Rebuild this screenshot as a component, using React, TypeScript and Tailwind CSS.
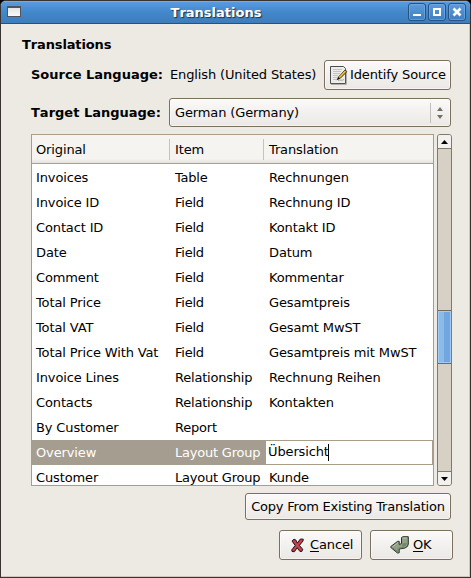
import type { ReactNode } from "react";

const rows: [string, string, string][] = [
  ["Invoices", "Table", "Rechnungen"],
  ["Invoice ID", "Field", "Rechnung ID"],
  ["Contact ID", "Field", "Kontakt ID"],
  ["Date", "Field", "Datum"],
  ["Comment", "Field", "Kommentar"],
  ["Total Price", "Field", "Gesamtpreis"],
  ["Total VAT", "Field", "Gesamt MwST"],
  ["Total Price With Vat", "Field", "Gesamtpreis mit MwST"],
  ["Invoice Lines", "Relationship", "Rechnung Reihen"],
  ["Contacts", "Relationship", "Kontakten"],
  ["By Customer", "Report", ""],
  ["Overview", "Layout Group", "Übersicht"],
  ["Customer", "Layout Group", "Kunde"],
];

const face =
  "rounded-[3px] border border-[#7b705f] bg-linear-to-b from-[#fbfaf9] via-[#f3f1ef] to-[#ebe8e4] shadow-[inset_0_0_0_1px_rgba(255,255,255,0.5)]";

function Button({ className, children }: { className: string; children: ReactNode }) {
  return <button className={`flex shrink-0 items-center ${face} ${className}`}>{children}</button>;
}

function TitleButton({ children }: { children: ReactNode }) {
  return (
    <button className="h-[18px] w-[18px] rounded-[3px] border border-[#28517f] bg-linear-to-b from-[#5c9bdc] to-[#3e7fc0] shadow-[inset_0_0_0_1px_rgba(125,178,232,0.55)]">
      <svg className="block" width="16" height="16" viewBox="0 0 16 16" fill="none" stroke="#fff" strokeWidth="2">
        {children}
      </svg>
    </button>
  );
}

function EditIcon() {
  return (
    <svg width="19" height="20" viewBox="0 0 19 20" className="shrink-0">
      <path d="M1.5 1.5H14.5L16.5 3.5V18.5H1.5z" fill="#ececea" stroke="#4c4d4b" />
      <path d="M2 19.3H17.3V5" fill="none" stroke="#8a8a86" strokeWidth=".8" />
      <path d="M4 4.5H13M4 6.5H12M4 8.5H11M4 10.5H9M4 12.5H8M4 14.5H8" stroke="#c3c4c1" />
      <path d="M9 15.5C11 14.5 13 16 15 14.5" stroke="#a5a6a2" fill="none" />
      <path d="M9.3 12.2L16 5.1L17.7 6.8L10.9 13.7Z" fill="#e5ae2d" stroke="#352b16" strokeWidth=".9" />
      <path d="M10.5 12L16.3 6" stroke="#f7d04b" strokeWidth=".8" />
      <path d="M7.7 15.2L9 12L11 13.8Z" fill="#111" />
    </svg>
  );
}

function CancelIcon() {
  return (
    <svg width="13" height="15" viewBox="0 0 13 15" className="shrink-0">
      <path
        d="M1 3L3 1.2L5 2.2L6.3 5.1L9.4 1L12.3 1.2L12 3L8.4 7.4L11.7 11.3L11 13.3L9 13.5L6.1 9.8L3.5 13.7L1 13.5L.8 11.8L4.2 7.5Z"
        fill="#b83d49"
        stroke="#251516"
        strokeLinejoin="round"
      />
      <path d="M3 2.8L9.8 12M10.6 2.3L2.5 12" stroke="#c9505a" strokeWidth=".8" />
    </svg>
  );
}

function OkIcon() {
  return (
    <svg width="20" height="18" viewBox="0 0 20 18" className="shrink-0">
      <path
        d="M11.5 1.5L13 .7H18.3V8L17.5 10.4L15 12L9.2 13V16.8L7.5 17L.8 11.5V10.5L7.7 5.3H9.2V8.4L11.5 7.6Z"
        fill="#91a185"
        stroke="#27332a"
        strokeLinejoin="round"
      />
      <path d="M12.5 2H17" fill="none" stroke="#b9c5ad" />
      <path d="M12.3 7.5L17.5 7L15.5 10L12.3 11Z" fill="#74856e" />
      <path d="M8 6.8L2.3 11" fill="none" stroke="#b3c0a7" />
      <path d="M2.5 11.7L8 15.7V12.3L14.5 11.2" fill="none" stroke="#74856e" />
    </svg>
  );
}

export default function App() {
  return (
    <div className="h-[578px] w-[471px] overflow-hidden bg-black font-['DejaVu_Sans',sans-serif] text-[13px] leading-[16px] tracking-[-0.13px] text-black">
      <div className="flex h-full flex-col overflow-hidden rounded-t-[6px] border border-[#38332f] bg-[#edeae3] shadow-[inset_-1px_-1px_0_#d1c6bb]">
        <header className="flex h-[23px] shrink-0 items-center border-b border-[#28517f] bg-linear-to-b from-[#5b9ce0] via-[#4288cb] to-[#3e7dba] pr-[4px] pl-[6px] shadow-[inset_0_1px_0_#75ace5]">
          <span className="mb-[1px] h-[11px] w-[14px] border border-t-2 border-[#4d5660] bg-linear-to-b from-[#e4e4e4] to-[#fafafa]" />
          <h1 className="flex-1 pt-[2px] pl-[3px] text-center font-bold tracking-normal text-white [font-kerning:none] [text-shadow:1px_1px_1px_#17334f]">Translations</h1>
          <div className="flex gap-[2px]">
            <TitleButton><path d="M4 11H12" /></TitleButton>
            <TitleButton><path d="M5 5H11V11H5Z" /></TitleButton>
            <TitleButton><path d="M4.5 4.5L11.5 11.5M11.5 4.5L4.5 11.5" strokeWidth="2.6" /></TitleButton>
          </div>
        </header>

        <main className="flex flex-1 flex-col pr-[19px] pl-[30px]">
          <h2 className="-ml-[9px] mt-[13px] font-bold tracking-[-0.13px] [font-kerning:none]">Translations</h2>
          <div className="mt-[7px] flex h-[30px] items-center">
            <span className="w-[139px] shrink-0 font-bold tracking-normal whitespace-nowrap">Source Language:</span>
            <span className="flex-1 whitespace-nowrap">English (United States)</span>
            <Button className="h-[30px] w-[127px] gap-[2px] pl-[4px] whitespace-nowrap">
              <EditIcon />
              Identify Source
            </Button>
          </div>
          <div className="mt-[8px] flex h-[29px] items-center">
            <span className="w-[138px] shrink-0 font-bold tracking-normal whitespace-nowrap [font-kerning:none]">Target Language:</span>
            <div className={`flex h-[29px] flex-1 items-center pl-[5px] ${face}`}>
              <span className="flex-1">German (Germany)</span>
              <span className="h-[20px] w-px bg-[#c3beb7]" />
              <svg width="19" height="14" viewBox="0 0 19 14" fill="#776e62">
                <path d="M6 5L9 1L12 5ZM6 9H12L9 13Z" />
              </svg>
            </div>
          </div>

          <div className="mt-[7px] -mr-px flex h-[352px] gap-[3px]">
            <div className="flex flex-1 flex-col overflow-hidden border border-[#a99c89] bg-white">
              <div className="flex h-[29px] shrink-0 items-center border-b border-[#a99f94] bg-linear-to-b from-[#f5f4f1] from-85% to-[#e4e1dd]">
                <span className="w-[137px] pt-[2px] pl-[4px]">Original</span>
                <span className="h-[21px] w-[94px] border-l border-[#c6c2bc] pt-[3px] pl-[5px]">Item</span>
                <span className="h-[21px] border-l border-[#c6c2bc] pt-[3px] pl-[5px]">Translation</span>
              </div>
              <div className="min-h-0 flex-1 overflow-hidden pt-px">
                {rows.map(([original, item, translation]) => {
                  const selected = original === "Overview";
                  return (
                    <div
                      key={original}
                      className={`flex h-[25px] items-center whitespace-nowrap ${selected ? "bg-[#a59d8f] text-white" : ""}`}
                    >
                      <span className="w-[139px] shrink-0 pl-[4px]">{original}</span>
                      <span className="w-[94px] shrink-0 pl-[4px] tracking-[-0.22px]">{item}</span>
                      {selected ? (
                        <span className="flex h-[25px] flex-1 items-center border border-[#a99c89] bg-white pb-[1px] pl-[2px] text-black">
                          {translation}
                          <span className="-ml-px h-[17px] w-px bg-black" />
                        </span>
                      ) : (
                        <span className="pl-[4px]">{translation}</span>
                      )}
                    </div>
                  );
                })}
              </div>
            </div>
            <div className="flex w-[15px] flex-col rounded-[3px] border border-[#83796a] bg-[#d7d0c5]">
              <span className="flex h-[14px] items-center justify-center rounded-t-[2px] border-b border-[#83796a] bg-[#f3f1ee]">
                <svg width="7" height="4" viewBox="0 0 7 4"><path d="M0 4L3.5 0L7 4Z" /></svg>
              </span>
              <span className="mt-[161px] h-[54px] border-y border-[#756b5d] bg-linear-to-r from-[#8abbe9] from-45% to-[#72a6de] to-50% shadow-[inset_0_0_0_1px_#a2cbf5]" />
              <span className="mt-auto flex h-[14px] items-center justify-center rounded-b-[2px] border-t border-[#83796a] bg-[#f3f1ee]">
                <svg width="7" height="4" viewBox="0 0 7 4"><path d="M0 0H7L3.5 4Z" /></svg>
              </span>
            </div>
          </div>

          <div className="mt-[7px] flex justify-end">
            <Button className="h-[27px] w-[206px] justify-center tracking-[-0.21px] whitespace-nowrap">Copy From Existing Translation</Button>
          </div>
          <div className="mt-[10px] -mr-[2px] flex justify-end gap-[8px]">
            <Button className="h-[30px] w-[83px] gap-[6px] pl-[11px]">
              <CancelIcon />
              <span><u className="underline-offset-2">C</u>ancel</span>
            </Button>
            <Button className="h-[30px] w-[83px] gap-[3px] pl-[19px]">
              <OkIcon />
              <span><u className="underline-offset-2">O</u>K</span>
            </Button>
          </div>
        </main>
      </div>
    </div>
  );
}
